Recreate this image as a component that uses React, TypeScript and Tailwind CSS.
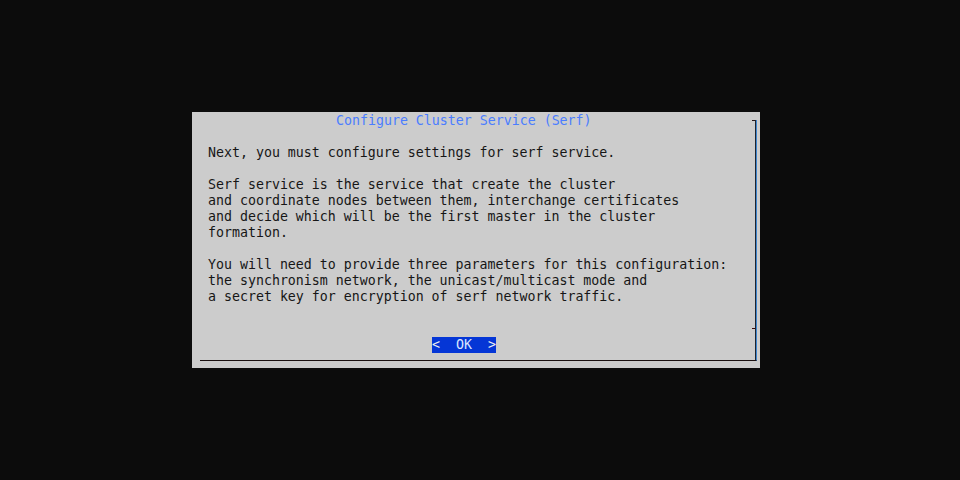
const lines = [
  "",
  "Next, you must configure settings for serf service.",
  "",
  "Serf service is the service that create the cluster",
  "and coordinate nodes between them, interchange certificates",
  "and decide which will be the first master in the cluster",
  "formation.",
  "",
  "You will need to provide three parameters for this configuration:",
  "the synchronism network, the unicast/multicast mode and",
  "a secret key for encryption of serf network traffic.",
  "",
  "",
]

export default function App() {
  return (
    <div className="h-[480px] w-[960px] bg-[#0c0c0c] pl-[192px] pt-[112px] font-['DejaVu_Sans_Mono',monospace] text-[13.28px] leading-4">
      <div className="h-[256px] w-[568px] bg-[#cccccc] pl-[8px] pt-[8px] text-[#161616]">
        <div className="relative flex w-[557px] flex-col border-r border-b border-r-[#3f86cf] border-b-[#1a1010] shadow-[inset_-1px_0_0_#1d2430]">
          {/* corner and tee ticks on the right edge */}
          <div className="absolute top-0 right-[1px] h-px w-[3px] bg-[#2a1a1a]" />
          <div className="absolute top-[208px] right-[1px] h-px w-[3px] bg-[#3a0a0a]" />
          <div className="-mt-[8px] flex flex-col pt-px">
            <div className="h-4 whitespace-pre pl-[136px] text-[#4a7dff]">Configure Cluster Service (Serf)</div>
            {lines.map((l, i) => (
              <div key={i} className="h-4 whitespace-pre pl-[8px]">
                {l}
              </div>
            ))}
            <div className="flex h-4 pl-[232px]">
              <span className="whitespace-pre bg-[#0536d6] text-[#f0f0f0]">
                {"<  "}
                <span className="text-[#dbe6ff]">OK</span>
                {"  >"}
              </span>
            </div>
            <div className="h-[7px]" />
          </div>
        </div>
      </div>
    </div>
  )
}
